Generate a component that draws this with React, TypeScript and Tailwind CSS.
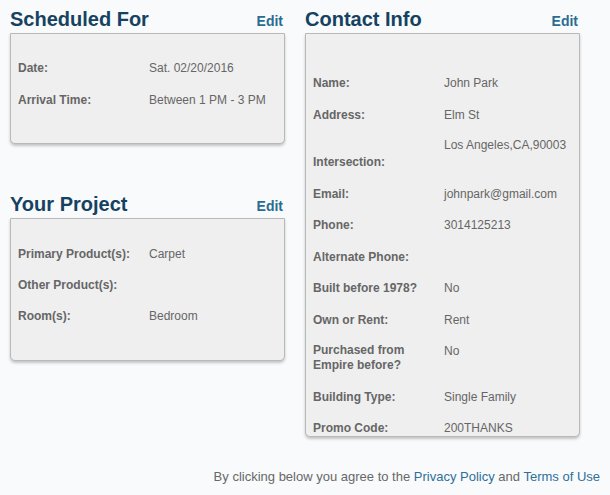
import React from "react";

type Row = { label: string; value?: string | string[]; twoLine?: boolean; tight?: boolean };

function Card({
  rows,
  className,
  gap,
}: {
  rows: Row[];
  className: string;
  gap: string;
}) {
  return (
    <div
      className={`w-[275px] border border-[#b9b9b9] bg-[#efefef] rounded-b-[5px] shadow-[0_2px_3px_rgba(0,0,0,0.22)] pl-[7px] flex flex-col ${gap} ${className}`}
    >
      {rows.map((r, i) => (
        <div key={i} className={`flex text-[12px] leading-[16px] text-[#666] ${r.tight ? "-mt-[14px]" : ""}`}>
          <div className={`w-[131px] shrink-0 pr-[6px] font-bold ${r.twoLine ? "leading-[15px]" : ""}`}>{r.label}</div>
          <div className="flex flex-col gap-[14px]">
            {Array.isArray(r.value)
              ? r.value.map((v, j) => <div key={j}>{v}</div>)
              : r.value && <div>{r.value}</div>}
          </div>
        </div>
      ))}
    </div>
  );
}

function Heading({ title, className = "" }: { title: string; className?: string }) {
  return (
    <div className={`w-[275px] h-[24px] flex items-baseline justify-between pr-[2px] mb-[2px] ${className}`}>
      <span className="text-[20px] leading-[24px] font-bold text-[#164261]">{title}</span>
      <a className="text-[14px] leading-[24px] font-bold text-[#2b6c93]">Edit</a>
    </div>
  );
}

export default function App() {
  return (
    <div
      className="w-[610px] h-[495px] bg-[#f8fafb] pt-[7px] pl-[10px] pr-[10px]"
      style={{ fontFamily: '"Liberation Sans", Arial, sans-serif' }}
    >
      <div className="flex gap-[20px]">
        <div className="flex flex-col">
          <Heading title="Scheduled For" />
          <Card
            className="pt-[26px] pb-[35px]"
            gap="gap-[16px]"
            rows={[
              { label: "Date:", value: "Sat. 02/20/2016" },
              { label: "Arrival Time:", value: "Between 1 PM - 3 PM" },
            ]}
          />
          <Heading title="Your Project" className="mt-[48px]" />
          <Card
            className="pt-[27px] pb-[36px]"
            gap="gap-[15px]"
            rows={[
              { label: "Primary Product(s):", value: "Carpet" },
              { label: "Other Product(s):" },
              { label: "Room(s):", value: "Bedroom" },
            ]}
          />
        </div>
        <div className="flex flex-col">
          <Heading title="Contact Info" />
          <Card
            className="pt-[41px] pb-0"
            gap="gap-[15.5px]"
            rows={[
              { label: "Name:", value: "John Park" },
              { label: "Address:", value: ["Elm St", "Los Angeles,CA,90003"] },
              { label: "Intersection:", tight: true },
              { label: "Email:", value: "johnpark@gmail.com" },
              { label: "Phone:", value: "3014125213" },
              { label: "Alternate Phone:" },
              { label: "Built before 1978?", value: "No" },
              { label: "Own or Rent:", value: "Rent" },
              { label: "Purchased from Empire before?", value: "No", twoLine: true },
              { label: "Building Type:", value: "Single Family" },
              { label: "Promo Code:", value: "200THANKS" },
            ]}
          />
        </div>
      </div>
      <div className="mt-[32px] text-right text-[13px] leading-[16px] text-[#686868]">
        By clicking below you agree to the{" "}
        <a className="text-[#2f6f9a]">Privacy Policy</a> and{" "}
        <a className="text-[#2f6f9a]">Terms of Use</a>
      </div>
    </div>
  );
}
